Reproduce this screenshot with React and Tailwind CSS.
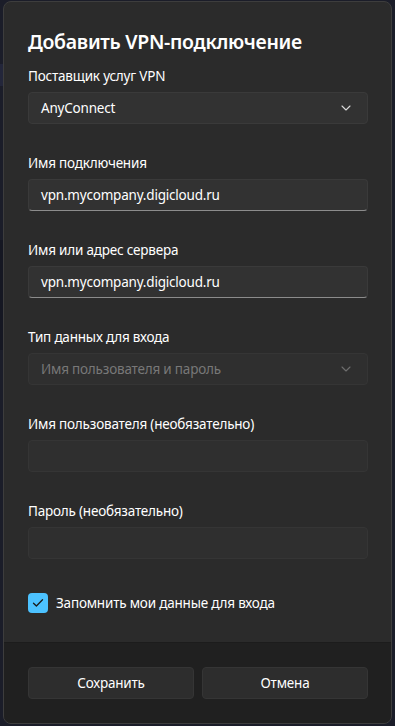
import React from "react";

const font = { fontFamily: '"Segoe UI", "Noto Sans", "Open Sans", sans-serif' };

function Chevron({ color = "#d0d0d0" }) {
  return (
    <svg width="10" height="6" viewBox="0 0 10 6" fill="none">
      <path d="M1 1 L5 5 L9 1" stroke={color} strokeWidth="1.1" strokeLinecap="round" strokeLinejoin="round" />
    </svg>
  );
}

function Label({ children }) {
  return <div className="text-[13.5px] tracking-[-0.2px] leading-[20px] text-white">{children}</div>;
}

function TextBox({ value, disabled }) {
  return (
    <div
      className={
        "h-8 rounded-[4px] flex items-center px-3 text-[13.5px] tracking-[-0.2px] border " +
        (disabled
          ? "bg-[#2f2f2f] border-[#353535]"
          : "bg-[#323232] border-[#3a3a3a] border-b-[#8c8c8c]")
      }
    >
      <span className="text-white">{value}</span>
    </div>
  );
}

function Combo({ value, disabled }) {
  return (
    <div
      className={
        "h-8 rounded-[4px] flex items-center justify-between pl-3 pr-[16px] text-[13.5px] tracking-[-0.2px] border " +
        (disabled ? "bg-[#2f2f2f] border-[#353535]" : "bg-[#323232] border-[#3a3a3a]")
      }
    >
      <span className={disabled ? "text-[#787878]" : "text-white"}>{value}</span>
      <Chevron color={disabled ? "#6e6e6e" : "#d8d8d8"} />
    </div>
  );
}

export default function App() {
  return (
    <div className="w-[395px] h-[726px] bg-[#1b1d29] pt-[1px] pl-[3px] overflow-hidden relative" style={font}>
      <div className="absolute left-0 top-[64px] w-[3px] h-[22px] bg-[#23263a]" />
      <div className="absolute left-0 top-[240px] w-[3px] h-[110px] bg-[#151722]" />
      <div className="w-[389px] h-[723px] rounded-[8px] border border-[#3d3d3d] bg-[#2b2b2b] flex flex-col overflow-hidden">
        <div className="flex-1 pl-6 pr-[23px] pt-[26px]">
          <div className="text-[19.5px] tracking-[-0.3px] leading-[28px] font-semibold text-white">Добавить VPN-подключение</div>
          <div className="mt-[10px] flex flex-col gap-[6px]">
            <Label>Поставщик услуг VPN</Label>
            <Combo value="AnyConnect" />
          </div>
          <div className="mt-[29px] flex flex-col gap-[6px]">
            <Label>Имя подключения</Label>
            <TextBox value="vpn.mycompany.digicloud.ru" />
          </div>
          <div className="mt-[29px] flex flex-col gap-[6px]">
            <Label>Имя или адрес сервера</Label>
            <TextBox value="vpn.mycompany.digicloud.ru" />
          </div>
          <div className="mt-[29px] flex flex-col gap-[6px]">
            <Label>Тип данных для входа</Label>
            <Combo value="Имя пользователя и пароль" disabled />
          </div>
          <div className="mt-[29px] flex flex-col gap-[6px]">
            <Label>Имя пользователя (необязательно)</Label>
            <TextBox value="" disabled />
          </div>
          <div className="mt-[29px] flex flex-col gap-[6px]">
            <Label>Пароль (необязательно)</Label>
            <TextBox value="" disabled />
          </div>
          <div className="mt-[34px] flex items-center gap-2">
            <div className="w-5 h-5 rounded-[4px] bg-[#4cc2ff] flex items-center justify-center">
              <svg width="12" height="10" viewBox="0 0 12 10" fill="none">
                <path d="M1.5 5.2 L4.4 8 L10.5 1.8" stroke="#1a1a1a" strokeWidth="1.3" strokeLinecap="round" strokeLinejoin="round" />
              </svg>
            </div>
            <span className="text-[13.5px] tracking-[-0.2px] text-white">Запомнить мои данные для входа</span>
          </div>
        </div>
        <div className="h-[81px] bg-[#202020] border-t border-[#1c1c1c] pl-6 pr-[23px] pt-6 flex gap-2">
          <button className="flex-1 h-8 rounded-[4px] bg-[#2d2d2d] border border-[#353535] text-white text-[13.5px] tracking-[-0.2px]">Сохранить</button>
          <button className="flex-1 h-8 rounded-[4px] bg-[#2d2d2d] border border-[#353535] text-white text-[13.5px] tracking-[-0.2px]">Отмена</button>
        </div>
      </div>
    </div>
  );
}
